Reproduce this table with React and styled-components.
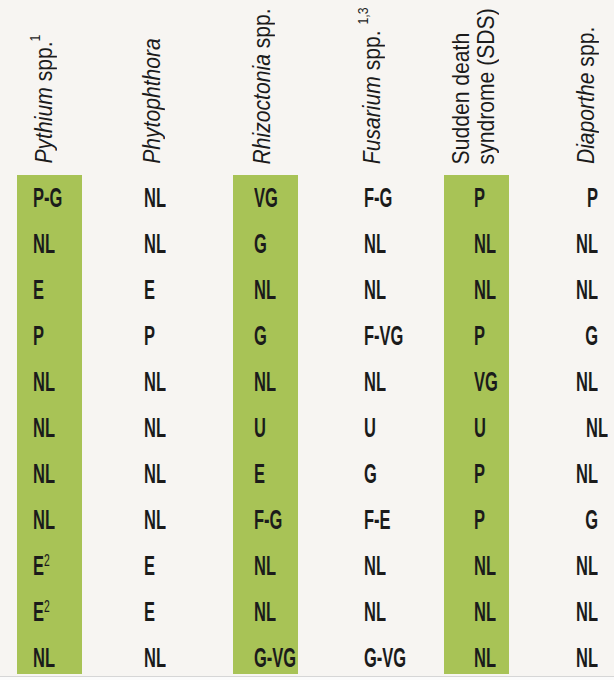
import React from 'react';
import styled, { createGlobalStyle } from 'styled-components';

const Global = createGlobalStyle`
  html, body { margin: 0; padding: 0; background: #f7f5f2; }
  body { width: 614px; height: 680px; overflow: hidden; }
`;

const Page = styled.div`
  width: 614px;
  height: 680px;
  background: #f7f5f2;
  display: flex;
  flex-direction: column;
  font-family: "Liberation Sans", Arial, sans-serif;
  color: #1b1b1b;
`;

const Table = styled.div`
  display: grid;
  grid-template-columns: 110px 106px 110px 101px 110px 1fr;
  padding-left: 17px;
  height: 674px;
  overflow: hidden;
  flex: none;
`;

const Column = styled.div`
  display: flex;
  flex-direction: column;
  min-width: 0;
`;

const Header = styled.div`
  height: 175px;
  box-sizing: border-box;
  display: flex;
  align-items: flex-end;
  justify-content: ${(p) => (p.$right ? 'flex-end' : 'flex-start')};
  padding: 0 ${(p) => (p.$right ? 16 : 0)}px 11px ${(p) => p.$hpad || 0}px;
`;

/* vertical line box rotated so that it reads bottom-to-top */
const HeaderText = styled.div`
  writing-mode: vertical-rl;
  transform: rotate(180deg);
  font-size: 24px;
  line-height: 25px;
  white-space: nowrap;
`;

/* condenses the heading along its reading direction, anchored at its start */
const HeaderInner = styled.span`
  display: inline-block;
  transform: scaleY(0.88);
  transform-origin: center top;
`;

const Genus = styled.i`
  font-style: italic;
`;

const HSup = styled.span`
  font-size: 14px;
  vertical-align: 9px;
  line-height: 0;
`;

const Band = styled.div`
  flex: 1;
  width: ${(p) => (p.$green ? '65px' : 'auto')};
  background: ${(p) => (p.$green ? '#a8c356' : 'transparent')};
  overflow: hidden;
`;

const Cell = styled.div`
  height: 46px;
  line-height: 46px;
  font-size: 27px;
  font-weight: 700;
  white-space: nowrap;
  text-align: ${(p) => (p.$right ? 'right' : 'left')};
  padding-left: ${(p) => (p.$right ? 0 : p.$pad)}px;
  padding-right: ${(p) => (p.$right ? 16 - (p.$shift || 0) : 0)}px;
`;

/* condensed gothic look */
const Value = styled.span`
  display: inline-block;
  transform: scaleX(0.61);
  transform-origin: ${(p) => (p.$right ? 'right' : 'left')} center;
`;

const Sup = styled.span`
  font-size: 17px;
  font-weight: 400;
  vertical-align: 9px;
  line-height: 0;
`;

const Footer = styled.div`
  margin-top: 2px;
  border-top: 1px solid #d6d6d6;
  flex: 1;
  background: #fbfbfb;
`;

const columns = [
  {
    key: 'pythium',
    green: true,
    pad: 16,
    hpad: 14,
    header: (
      <>
        <Genus>Pythium</Genus> spp.<HSup>1</HSup>
      </>
    ),
    values: ['P-G', 'NL', 'E', 'P', 'NL', 'NL', 'NL', 'NL', ['E', '2'], ['E', '2'], 'NL'],
  },
  {
    key: 'phytophthora',
    pad: 17,
    hpad: 12,
    header: <Genus>Phytophthora</Genus>,
    values: ['NL', 'NL', 'E', 'P', 'NL', 'NL', 'NL', 'NL', 'E', 'E', 'NL'],
  },
  {
    key: 'rhizoctonia',
    green: true,
    pad: 21,
    hpad: 16,
    header: (
      <>
        <Genus>Rhizoctonia</Genus> spp.
      </>
    ),
    values: ['VG', 'G', 'NL', 'G', 'NL', 'U', 'E', 'F-G', 'NL', 'NL', 'G-VG'],
  },
  {
    key: 'fusarium',
    pad: 21,
    hpad: 16,
    header: (
      <>
        <Genus>Fusarium</Genus> spp. <HSup>1,3</HSup>
      </>
    ),
    values: ['F-G', 'NL', 'NL', 'F-VG', 'NL', 'U', 'G', 'F-E', 'NL', 'NL', 'G-VG'],
  },
  {
    key: 'sds',
    green: true,
    pad: 30,
    hpad: 4,
    header: (
      <>
        Sudden death
        <br />
        syndrome (SDS)
      </>
    ),
    values: ['P', 'NL', 'NL', 'P', 'VG', 'U', 'P', 'P', 'NL', 'NL', 'NL'],
  },
  {
    key: 'diaporthe',
    right: true,
    header: (
      <>
        <Genus>Diaporthe</Genus> spp.
      </>
    ),
    values: ['P', 'NL', 'NL', 'G', 'NL', { v: 'NL', shift: 10 }, 'NL', 'G', 'NL', 'NL', 'NL'],
  },
];

function renderValue(v, right) {
  if (Array.isArray(v)) {
    return (
      <Value $right={right}>
        {v[0]}
        <Sup>{v[1]}</Sup>
      </Value>
    );
  }
  if (typeof v === 'object') {
    return <Value $right={right}>{v.v}</Value>;
  }
  return <Value $right={right}>{v}</Value>;
}

export default function App() {
  return (
    <>
      <Global />
      <Page>
        <Table>
          {columns.map((col) => (
            <Column key={col.key}>
              <Header $hpad={col.hpad} $right={col.right}>
                <HeaderText>
                  <HeaderInner>{col.header}</HeaderInner>
                </HeaderText>
              </Header>
              <Band $green={col.green}>
                {col.values.map((v, i) => (
                  <Cell
                    key={i}
                    $pad={col.pad}
                    $right={col.right}
                    $shift={typeof v === 'object' && !Array.isArray(v) ? v.shift : 0}
                  >
                    {renderValue(v, col.right)}
                  </Cell>
                ))}
              </Band>
            </Column>
          ))}
        </Table>
        <Footer />
      </Page>
    </>
  );
}
